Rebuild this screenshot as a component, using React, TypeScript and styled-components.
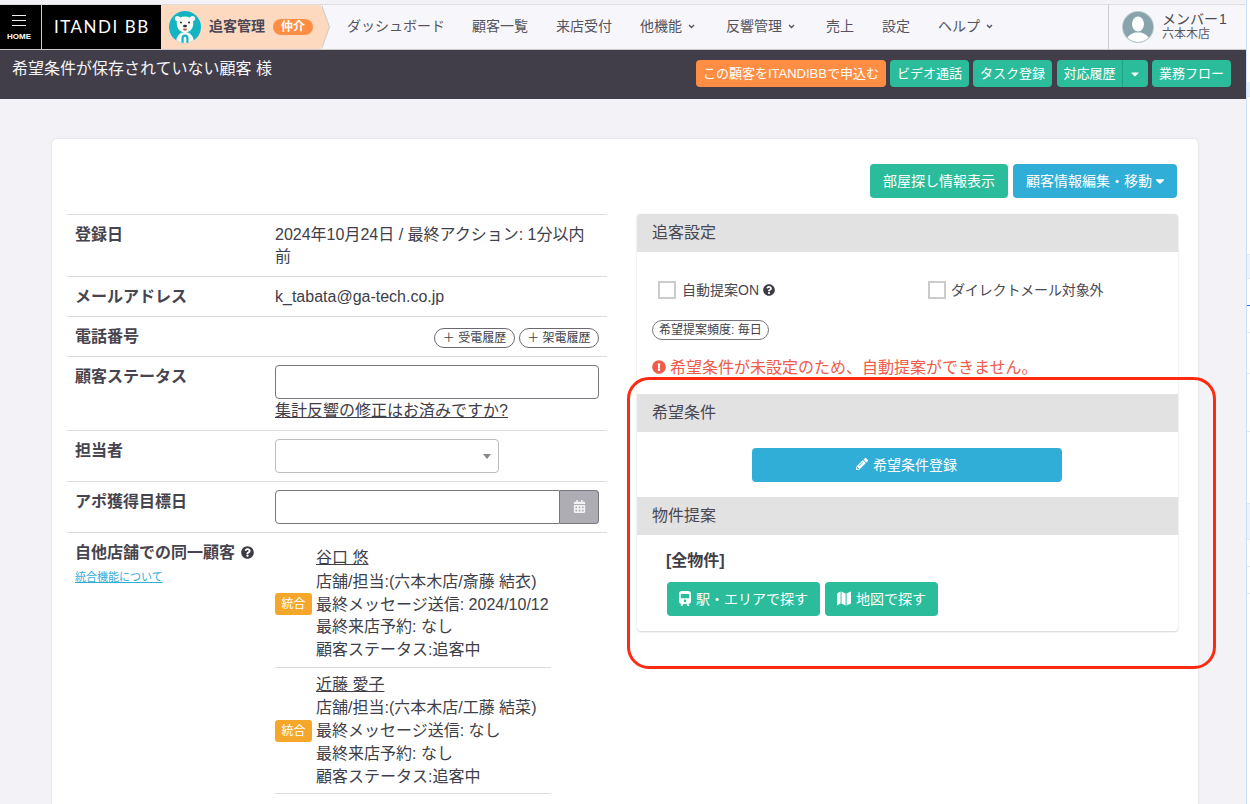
import { FC } from "react";
import styled, { createGlobalStyle } from "styled-components";
import {
  FaCalendarAlt,
  FaCaretDown,
  FaExclamationCircle,
  FaPencilAlt,
  FaQuestionCircle,
} from "react-icons/fa";

const GlobalStyle = createGlobalStyle`
  html, body {
    margin: 0;
    padding: 0;
    background: #fff;
  }
  * {
    box-sizing: border-box;
  }
  body {
    font-family: "Liberation Sans", "Noto Sans CJK JP", sans-serif;
    font-size: 16px;
    line-height: 1.42857;
    color: #403e48;
  }
`;

const Page = styled.div`
  position: relative;
  display: flex;
  width: 1250px;
  height: 804px;
  overflow: hidden;
`;

const Main = styled.div`
  width: 1246px;
  padding-top: 4px;
  background: #f3f3f7;
`;

const Strip = styled.div`
  display: flex;
  flex-direction: column;
  width: 4px;
  padding-top: 82px;
  border-left: 1px solid #cfe0fa;
  background: #fff;
`;

const StripCell = styled.div<{ $h: number; $fill?: string; $mark?: boolean }>`
  height: ${(p) => p.$h}px;
  border-bottom: 1px solid ${(p) => (p.$mark ? "#2a6ee0" : "#dfe7f5")};
  background: ${(p) => p.$fill || "#fff"};
`;

/* top navigation */
const Nav = styled.header`
  display: flex;
  height: 46px;
  border-top: 1px solid #dedede;
  border-bottom: 1px solid #c9c9c9;
  background: #f7f7fb;
`;

const HomeLink = styled.a`
  display: flex;
  flex-direction: column;
  align-items: center;
  width: 42px;
  padding: 10px 3px 0 0;
  background: #000;
  border-right: 1px solid #cfcfcf;
  color: #fff;
`;

const Burger = styled.span`
  display: block;
  width: 14px;
  height: 11px;
  border-top: 1px solid #eee;
  border-bottom: 1px solid #eee;
  position: relative;
  &::after {
    content: "";
    position: absolute;
    left: 0;
    right: 0;
    top: 4px;
    height: 1px;
    background: #eee;
  }
`;

const HomeText = styled.span`
  margin-top: 6px;
  font-size: 8px;
  line-height: 10px;
  font-weight: 700;
`;

const Logo = styled.div`
  display: flex;
  align-items: center;
  width: 119px;
  padding-left: 12px;
  background: #000;
  color: #fff;
  font-family: Lato, sans-serif;
  font-size: 17px;
  letter-spacing: 1.5px;
  white-space: nowrap;
`;

const Product = styled.div`
  position: relative;
  display: flex;
  align-items: center;
  width: 160px;
  padding-left: 8px;
  background: #fdd9c0;
  &::before,
  &::after {
    content: "";
    position: absolute;
    top: 0;
    bottom: 0;
    width: 8px;
    clip-path: polygon(0 0, 100% 50%, 0 100%);
  }
  &::before {
    left: 100%;
    margin-left: 1px;
    background: #c9c9c9;
  }
  &::after {
    left: 100%;
    background: #fdd9c0;
  }
`;

const ProductName = styled.span`
  margin-left: 8px;
  font-size: 14px;
  font-weight: 700;
  color: #4a4756;
`;

const ProductBadge = styled.span`
  margin-left: 8px;
  width: 40px;
  height: 16px;
  border-radius: 8px;
  background: #ff8e44;
  color: #fff;
  font-size: 12px;
  line-height: 16px;
  font-weight: 700;
  text-align: center;
`;

const NavList = styled.ul`
  display: flex;
  flex: 1;
  align-items: center;
  margin: 0;
  padding: 0 0 0 12px;
  list-style: none;
`;

const NavItem = styled.li`
  display: flex;
  align-items: center;
  gap: 6px;
  padding: 0 14px;
  font-size: 14px;
  color: #55535d;
  white-space: nowrap;
  &:first-child {
    margin-right: -1px;
  }
`;

const Chevron = styled.svg`
  width: 7px;
  height: 5px;
  margin-right: 3px;
`;

const UserBox = styled.div`
  display: flex;
  align-items: center;
  gap: 8px;
  width: 138px;
  padding-left: 13px;
  border-left: 1px solid #cfcfcf;
`;

const UserText = styled.div`
  display: flex;
  flex-direction: column;
  line-height: 15px;
`;

const UserName = styled.span`
  font-size: 14px;
  word-spacing: -3px;
  color: #4a4852;
  white-space: nowrap;
`;

const UserShop = styled.span`
  font-size: 12px;
  color: #5a5862;
`;

/* dark title bar */
const TitleBar = styled.div`
  display: flex;
  justify-content: space-between;
  height: 49px;
  padding: 10px 15px 0 12px;
  background: #413e4a;
`;

const Title = styled.h1`
  margin: 0;
  font-size: 16px;
  line-height: 17px;
  font-weight: 400;
  color: #f4f4f4;
`;

const TitleActions = styled.div`
  display: flex;
  gap: 4px;
`;

const Button = styled.button<{ $tone: "teal" | "blue" | "orange"; $small?: boolean }>`
  display: inline-flex;
  align-items: center;
  justify-content: center;
  gap: 3px;
  height: ${(p) => (p.$small ? 27 : 34)}px;
  padding: 0 ${(p) => (p.$small ? 7 : 13)}px 2px;
  border: 0;
  border-radius: 4px;
  background: ${(p) =>
    p.$tone === "teal" ? "#2bbd9b" : p.$tone === "blue" ? "#31aed8" : "#ff8e44"};
  color: #fff;
  font-family: inherit;
  font-size: ${(p) => (p.$small ? 13 : 14)}px;
  white-space: nowrap;
`;

const SplitGroup = styled.div`
  display: flex;
  margin-left: 1px;
`;

const SplitMain = styled(Button)`
  border-radius: 4px 0 0 4px;
  border-right: 1px solid #1fa385;
  width: 66px;
`;

const SplitCaret = styled(Button)`
  border-radius: 0 4px 4px 0;
  width: 25px;
  padding: 0;
  font-size: 12px;
`;

const MenuCaret = styled(FaCaretDown)`
  width: 14px;
  height: 14px;
  margin: 2px -3px 0 -2px;
`;

/* card */
const Content = styled.main`
  padding: 40px 48px 0 52px;
`;

const Card = styled.section`
  padding: 25px 20px 40px 15px;
  border-radius: 5px;
  background: #fff;
  box-shadow: 0 0 2px 1px #e6e6ea;
`;

const Toolbar = styled.div`
  display: flex;
  justify-content: flex-end;
  gap: 5px;
  margin-bottom: 16px;
  padding-right: 1px;
`;

const Columns = styled.div`
  display: grid;
  grid-template-columns: 540px 541px;
  gap: 30px;
`;

const Row = styled.div`
  display: grid;
  grid-template-columns: 200px 1fr;
  border-top: 1px solid #dcdcdc;
`;

const Label = styled.div`
  padding: 9px 8px 8px;
  font-weight: 700;
  line-height: 22px;
  color: #46444e;
`;

const HelpIcon = styled(FaQuestionCircle)`
  margin-left: 6px;
  width: 13px;
  height: 13px;
  vertical-align: -1px;
  color: #3c3a44;
`;

const SmallLink = styled.a`
  display: block;
  margin-top: 6px;
  font-size: 11px;
  line-height: 14px;
  font-weight: 400;
  color: #31aed8;
  text-decoration: underline;
`;

const Value = styled.div`
  padding: 8px;
  min-width: 0;
`;

const TextValue = styled(Value)`
  padding-top: 9px;
  line-height: 22px;
`;

const PillRow = styled.div`
  display: flex;
  align-items: flex-start;
  justify-content: flex-end;
  gap: 4px;
  height: 22px;
  padding-top: 3px;
`;

const Pill = styled.span`
  display: inline-block;
  flex: none;
  height: 20px;
  padding: 0 7.5px;
  border: 1px solid #6a6870;
  border-radius: 10px;
  font-size: 12px;
  line-height: 18px;
  white-space: nowrap;
`;

const TextInput = styled.input`
  display: block;
  width: 100%;
  height: 34px;
  border: 1px solid #77757d;
  border-radius: 4px;
  background: #fff;
`;

const DarkLink = styled.a`
  display: block;
  color: #403e48;
  text-decoration: underline;
`;

const StatusLink = styled(DarkLink)`
  margin: 1px 0 -1px;
`;

const NameLink = styled(DarkLink)`
  margin-bottom: 1px;
`;

const SelectWrap = styled.div`
  position: relative;
  width: 224px;
  &::after {
    content: "";
    position: absolute;
    right: 8px;
    top: 15px;
    border-left: 4px solid transparent;
    border-right: 4px solid transparent;
    border-top: 5px solid #888;
  }
`;

const Select = styled.select`
  display: block;
  width: 100%;
  height: 34px;
  border: 1px solid #bdbdbd;
  border-radius: 4px;
  background: #fff;
  appearance: none;
`;

const DateGroup = styled.div`
  display: flex;
`;

const DateInput = styled(TextInput)`
  flex: 1;
  border-radius: 4px 0 0 4px;
`;

const DateAddon = styled.span`
  display: flex;
  align-items: center;
  justify-content: center;
  width: 39px;
  height: 34px;
  border: 1px solid #77757d;
  border-left: 0;
  border-radius: 0 4px 4px 0;
  background: #adadb3;
  color: #f2f2f2;
  font-size: 13px;
`;

const MergeList = styled.div`
  width: 276px;
`;

const MergeItem = styled.div`
  display: flex;
  align-items: center;
  gap: 4px;
  padding: 6px 0 4.5px;
  border-bottom: 1px solid #dcdcdc;
  white-space: nowrap;
`;

const MergeBadge = styled.span`
  flex: none;
  width: 37px;
  height: 22px;
  border-radius: 3px;
  background: #f5a72c;
  color: #fff;
  font-size: 12px;
  line-height: 22px;
  text-align: center;
`;

/* right column panel */
const Panel = styled.div`
  border-radius: 4px;
  box-shadow: 0 1px 2px 0 #d4d4d8, 0 0 1px 0 #dedee2;
  overflow: hidden;
`;

const PanelHead = styled.h2`
  margin: 0;
  height: 38px;
  padding: 7px 15px 5px;
  background: #e2e2e2;
  font-size: 16px;
  line-height: 24px;
  font-weight: 400;
  color: #4a4852;
`;

const SettingsBody = styled.div`
  height: 142px;
  padding: 29px 15px 0;
`;

const CheckRow = styled.div`
  display: grid;
  grid-template-columns: 270px 1fr;
  padding-left: 6px;
`;

const CheckLabel = styled.label`
  display: flex;
  align-items: center;
  gap: 6px;
  font-size: 14px;
  line-height: 18px;
  color: #4a4852;
`;

const DirectLabel = styled(CheckLabel)`
  gap: 5px;
  letter-spacing: -0.15px;
`;

const Check = styled.input`
  appearance: none;
  width: 18px;
  height: 18px;
  margin: 0;
  border: 2px solid #cbcbcb;
  background: #fff;
`;

const LabelHelp = styled(FaQuestionCircle)`
  margin-left: -2px;
  width: 12px;
  height: 12px;
  color: #3c3a44;
`;

const FreqChip = styled.span`
  display: inline-block;
  margin-top: 21px;
  height: 20px;
  padding: 0 6px;
  border: 1px solid #77757d;
  border-radius: 10px;
  font-size: 12px;
  line-height: 18px;
`;

const ErrorText = styled.p`
  display: flex;
  align-items: center;
  gap: 5px;
  margin: 15px 0 0;
  font-size: 16px;
  line-height: 23px;
  color: #ee5c4a;
  white-space: nowrap;
`;

const ErrorIcon = styled(FaExclamationCircle)`
  width: 14px;
  height: 14px;
  margin-right: -1px;
`;

const CenterBody = styled.div`
  display: flex;
  justify-content: center;
  padding: 16px 2px 15px 0;
`;

const WideButton = styled(Button)`
  width: 310px;
  gap: 5px;
`;

const SearchBody = styled.div`
  height: 96px;
  padding: 15px 30px 0;
`;

const AllProps = styled.div`
  font-weight: 700;
  line-height: 22px;
  margin-bottom: 10px;
  margin-left: -1px;
`;

const SearchActions = styled.div`
  display: flex;
  gap: 5px;
`;

const SearchButton = styled(Button)`
  gap: 5px;
  padding: 0 12px 2px;
`;

const RedFrame = styled.div`
  position: absolute;
  left: 627px;
  top: 377px;
  width: 589px;
  height: 292px;
  border: 3.5px solid #ff2a12;
  border-radius: 22px;
  pointer-events: none;
`;

const BearMark: FC = () => (
  <svg width="32" height="32" viewBox="0 0 32 32">
    <defs>
      <clipPath id="bear-clip">
        <circle cx="16" cy="16" r="16" />
      </clipPath>
    </defs>
    <g clipPath="url(#bear-clip)">
      <rect width="32" height="32" fill="#13b5c3" />
      <path d="M7 32c0-7 4-11 9-11s9 4 9 11z" fill="#f7f7f2" />
      <circle cx="8.5" cy="7.5" r="2.6" fill="#f7f7f2" />
      <circle cx="23.5" cy="7.5" r="2.6" fill="#f7f7f2" />
      <path d="M8 10c1-3 4-4.500 8-4.500s7 1.500 8 4.500c1 5-1 11-8 11.500C9 21 7 15 8 10z" fill="#fbfbf7" />
      <circle cx="12" cy="11.500" r="1" fill="#2c2a30" />
      <circle cx="20" cy="11.500" r="1" fill="#2c2a30" />
      <ellipse cx="16" cy="15" rx="2" ry="1.300" fill="#2c2a30" />
      <path d="M14 17.500h4l-.7 2h-2.600z" fill="#c5553f" />
      <path d="M12.500 32v-5a3.500 3.500 0 017 0v5h-2.200v-5a1.300 1.300 0 00-2.600 0v5z" fill="#13b5c3" />
    </g>
  </svg>
);

const MemberAvatar: FC = () => (
  <svg width="32" height="32" viewBox="0 0 32 32">
    <defs>
      <clipPath id="member-clip">
        <circle cx="16" cy="16" r="15" />
      </clipPath>
    </defs>
    <circle cx="16" cy="16" r="16" fill="#b9c9cd" />
    <g clipPath="url(#member-clip)">
      <rect width="32" height="32" fill="#88a3ab" />
      <ellipse cx="16" cy="13" rx="6" ry="7.500" fill="#fff" />
      <path d="M4 32c0-7 5-9 9-10.500h6C23 23 28 25 28 32z" fill="#fff" />
    </g>
  </svg>
);

const TrainIcon: FC = () => (
  <svg width="12" height="15" viewBox="0 0 12 15" fill="currentColor">
    <path
      fillRule="evenodd"
      d="M3 0h6a3 3 0 013 3v7a3 3 0 01-3 3H3a3 3 0 01-3-3V3a3 3 0 013-3zM1.800 3v4.200h8.400V3zM6 8.600a1.300 1.300 0 100 2.600 1.300 1.300 0 000-2.600z"
    />
    <path d="M2.500 13h1.800l-.8 2H1.500zM7.700 13h1.800l1 2H8.500z" />
  </svg>
);

const MapIcon: FC = () => (
  <svg width="14" height="15" viewBox="0 0 14 15" fill="currentColor">
    <path d="M0 2.500L3.600.5v12L0 14.500zM4.500.5l4.100 2v12l-4.100-2zM9.600 2.500L14 .5v12l-4.400 2z" />
  </svg>
);

const NavCaret: FC = () => (
  <Chevron viewBox="0 0 7 5">
    <path d="M1 1l2.500 2.500L6 1" fill="none" stroke="#55535d" strokeWidth="1.400" />
  </Chevron>
);

const navItems = [
  { label: "ダッシュボード" },
  { label: "顧客一覧" },
  { label: "来店受付" },
  { label: "他機能", caret: true },
  { label: "反響管理", caret: true },
  { label: "売上" },
  { label: "設定" },
  { label: "ヘルプ", caret: true },
];

const mergeItems = [
  { name: "谷口 悠", staff: "斎藤 結衣", sent: "2024/10/12" },
  { name: "近藤 愛子", staff: "工藤 結菜", sent: "なし" },
];

const stripCells = [
  { h: 15, fill: "#e6effc" },
  { h: 158 },
  { h: 24, fill: "#eef4fd" },
  { h: 27, mark: true },
  { h: 27 },
  { h: 41 },
  { h: 58 },
  { h: 72 },
  { h: 36, fill: "#eef4fd" },
  { h: 27 },
  { h: 27 },
];

const App = () => {
  return (
    <Page>
      <GlobalStyle />
      <Main>
        <Nav>
          <HomeLink>
            <Burger />
            <HomeText>HOME</HomeText>
          </HomeLink>
          <Logo>ITANDI BB</Logo>
          <Product>
            <BearMark />
            <ProductName>追客管理</ProductName>
            <ProductBadge>仲介</ProductBadge>
          </Product>
          <NavList>
            {navItems.map((item) => (
              <NavItem key={item.label}>
                {item.label}
                {item.caret && <NavCaret />}
              </NavItem>
            ))}
          </NavList>
          <UserBox>
            <MemberAvatar />
            <UserText>
              <UserName>メンバー 1</UserName>
              <UserShop>六本木店</UserShop>
            </UserText>
          </UserBox>
        </Nav>

        <TitleBar>
          <Title>希望条件が保存されていない顧客 様</Title>
          <TitleActions>
            <Button $tone="orange" $small>
              この顧客をITANDIBBで申込む
            </Button>
            <Button $tone="teal" $small>
              ビデオ通話
            </Button>
            <Button $tone="teal" $small>
              タスク登録
            </Button>
            <SplitGroup>
              <SplitMain $tone="teal" $small>
                対応履歴
              </SplitMain>
              <SplitCaret $tone="teal" $small>
                <FaCaretDown />
              </SplitCaret>
            </SplitGroup>
            <Button $tone="teal" $small>
              業務フロー
            </Button>
          </TitleActions>
        </TitleBar>

        <Content>
          <Card>
            <Toolbar>
              <Button $tone="teal">部屋探し情報表示</Button>
              <Button $tone="blue">
                顧客情報編集・移動
                <MenuCaret />
              </Button>
            </Toolbar>
            <Columns>
              <div>
                <Row>
                  <Label>登録日</Label>
                  <TextValue>2024年10月24日 / 最終アクション: 1分以内前</TextValue>
                </Row>
                <Row>
                  <Label>メールアドレス</Label>
                  <TextValue>k_tabata@ga-tech.co.jp</TextValue>
                </Row>
                <Row>
                  <Label>電話番号</Label>
                  <Value>
                    <PillRow>
                      <Pill>＋ 受電履歴</Pill>
                      <Pill>＋ 架電履歴</Pill>
                    </PillRow>
                  </Value>
                </Row>
                <Row>
                  <Label>顧客ステータス</Label>
                  <Value>
                    <TextInput />
                    <StatusLink>集計反響の修正はお済みですか?</StatusLink>
                  </Value>
                </Row>
                <Row>
                  <Label>担当者</Label>
                  <Value>
                    <SelectWrap>
                      <Select />
                    </SelectWrap>
                  </Value>
                </Row>
                <Row>
                  <Label>アポ獲得目標日</Label>
                  <Value>
                    <DateGroup>
                      <DateInput />
                      <DateAddon>
                        <FaCalendarAlt />
                      </DateAddon>
                    </DateGroup>
                  </Value>
                </Row>
                <Row>
                  <Label>
                    自他店舗での同一顧客
                    <HelpIcon />
                    <SmallLink>統合機能について</SmallLink>
                  </Label>
                  <Value>
                    <MergeList>
                      {mergeItems.map((item) => (
                        <MergeItem key={item.name}>
                          <MergeBadge>統合</MergeBadge>
                          <div>
                            <NameLink>{item.name}</NameLink>
                            <div>店舗/担当:(六本木店/{item.staff})</div>
                            <div>最終メッセージ送信: {item.sent}</div>
                            <div>最終来店予約: なし</div>
                            <div>顧客ステータス:追客中</div>
                          </div>
                        </MergeItem>
                      ))}
                    </MergeList>
                  </Value>
                </Row>
              </div>

              <div>
                <Panel>
                  <PanelHead>追客設定</PanelHead>
                  <SettingsBody>
                    <CheckRow>
                      <CheckLabel>
                        <Check type="checkbox" />
                        自動提案ON
                        <LabelHelp />
                      </CheckLabel>
                      <DirectLabel>
                        <Check type="checkbox" />
                        ダイレクトメール対象外
                      </DirectLabel>
                    </CheckRow>
                    <FreqChip>希望提案頻度: 毎日</FreqChip>
                    <ErrorText>
                      <ErrorIcon />
                      希望条件が未設定のため、自動提案ができません。
                    </ErrorText>
                  </SettingsBody>
                  <PanelHead>希望条件</PanelHead>
                  <CenterBody>
                    <WideButton $tone="blue">
                      <FaPencilAlt size={12} />
                      希望条件登録
                    </WideButton>
                  </CenterBody>
                  <PanelHead>物件提案</PanelHead>
                  <SearchBody>
                    <AllProps>[全物件]</AllProps>
                    <SearchActions>
                      <SearchButton $tone="teal">
                        <TrainIcon />
                        駅・エリアで探す
                      </SearchButton>
                      <SearchButton $tone="teal">
                        <MapIcon />
                        地図で探す
                      </SearchButton>
                    </SearchActions>
                  </SearchBody>
                </Panel>
              </div>
            </Columns>
          </Card>
        </Content>
      </Main>
      <Strip>
        {stripCells.map((cell, i) => (
          <StripCell key={i} $h={cell.h} $fill={cell.fill} $mark={cell.mark} />
        ))}
      </Strip>
      <RedFrame />
    </Page>
  );
};

export default App;
